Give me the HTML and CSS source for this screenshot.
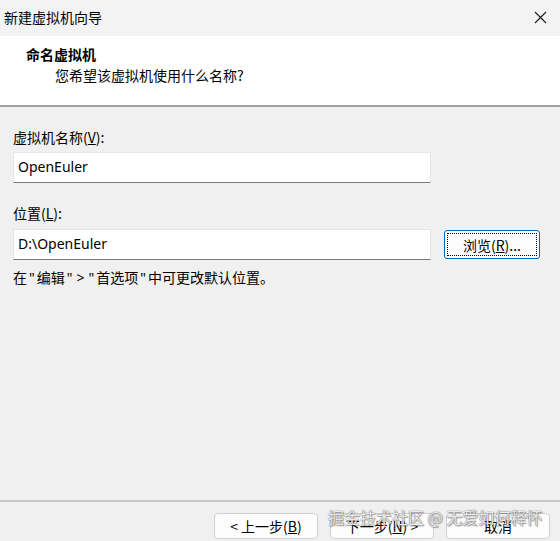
FILE: index.html
```html
<!DOCTYPE html>
<html lang="zh-CN">
<head>
<meta charset="utf-8">
<title>新建虚拟机向导</title>
<link rel="stylesheet" href="styles.css">
</head>
<body>
<div class="window">
  <div class="titlebar">
    <span class="title">新建虚拟机向导</span>
    <svg class="close" width="13" height="13" viewBox="0 0 13 13"><path d="M1 1 L12 12 M12 1 L1 12" stroke="#1a1a1a" stroke-width="1.1" fill="none"/></svg>
  </div>
  <div class="header">
    <div class="h-title">命名虚拟机</div>
    <div class="h-sub">您希望该虚拟机使用什么名称?</div>
  </div>
  <div class="content">
    <div class="label">虚拟机名称(<u>V</u>):</div>
    <div class="row">
      <div class="input">OpenEuler</div>
    </div>
    <div class="label label2">位置(<u>L</u>):</div>
    <div class="row">
      <div class="input">D:\OpenEuler</div>
      <div class="browse"><span class="focus">浏览(<u>R</u>)...</span></div>
    </div>
    <div class="hint">在<span class="q">"</span>编辑<span class="q">"</span><span class="q">&gt;</span><span class="q">"</span>首选项<span class="q">"</span>中可更改默认位置。</div>
  </div>
  <div class="footer">
    <div class="btn">&lt; 上一步(<u>B</u>)</div>
    <div class="btn">下一步(<u>N</u>) &gt;</div>
    <div class="btn">取消</div>
    <div class="watermark">掘金技术社区 @ 无爱如何释怀</div>
  </div>
</div>
</body>
</html>
```
FILE: styles.css
```css
html, body {
  margin: 0;
  padding: 0;
}
body {
  width: 560px;
  height: 541px;
  overflow: hidden;
  background: #f0f0f0;
  font-family: "Segoe UI", "Noto Sans", "Noto Sans CJK SC", sans-serif;
  font-size: 14px;
  color: #000;
}
.window {
  display: flex;
  flex-direction: column;
  height: 541px;
}
.titlebar {
  height: 36px;
  background: #f3f3f3;
  display: flex;
  align-items: center;
  justify-content: space-between;
  padding: 0 13px 2px 4px;
  box-sizing: border-box;
}
.title {
  font-family: "Noto Sans CJK SC", sans-serif;
  font-size: 14px;
}
.header {
  height: 71px;
  background: #fff;
  border-bottom: 2px solid #a0a0a0;
  box-sizing: border-box;
  padding: 8px 0 0 26px;
  font-family: "Noto Sans CJK SC", sans-serif;
}
.h-title {
  font-weight: bold;
  font-size: 14px;
  line-height: 20px;
}
.h-sub {
  margin-left: 29px;
  margin-top: 1px;
  line-height: 20px;
}
.content {
  padding: 20px 0 0 13px;
  font-family: "Noto Sans CJK SC", sans-serif;
}
.label {
  line-height: 20px;
  margin-bottom: 5px;
}
.label2 {
  margin-top: 20px;
  margin-bottom: 6px;
}
.row {
  display: flex;
  align-items: center;
  gap: 13px;
}
.input {
  width: 418px;
  height: 31px;
  box-sizing: border-box;
  background: #fff;
  border: 1px solid #e6e6e6;
  border-bottom: 1px solid #7a7a7a;
  padding: 0 0 2px 4px;
  display: flex;
  align-items: center;
  font-family: "Segoe UI", "Noto Sans", "Noto Sans CJK SC", sans-serif;
}
.browse {
  width: 96px;
  height: 29px;
  box-sizing: border-box;
  border: 1px solid #0067c0;
  border-radius: 3px;
  background: #fdfdfd;
  padding: 2px;
  display: flex;
}
.focus {
  flex: 1;
  border: 1px dotted #000;
  display: flex;
  align-items: center;
  justify-content: center;
  line-height: 18px;
}
.hint {
  margin-top: 7px;
  line-height: 20px;
}
.q {
  font-family: "Noto Sans", sans-serif;
  padding: 0 2px;
}
.footer {
  margin-top: auto;
  border-top: 2px solid #c8c8c8;
  height: 41px;
  box-sizing: border-box;
  display: flex;
  justify-content: flex-end;
  align-items: flex-start;
  gap: 12px;
  padding: 11px 10px 0 0;
  position: relative;
  font-family: "Noto Sans CJK SC", sans-serif;
}
.btn {
  width: 104px;
  height: 26px;
  box-sizing: border-box;
  background: #fdfdfd;
  border: 1px solid #d0d0d0;
  border-radius: 4px;
  display: flex;
  align-items: center;
  justify-content: center;
  line-height: 18px;
}
.watermark {
  position: absolute;
  left: 328px;
  top: 4px;
  font-size: 16px;
  line-height: 22px;
  color: rgba(255, 255, 255, 0.85);
  text-shadow: 0 0 1px #777, 0 0 1px #777, 1px 1px 1px rgba(0,0,0,0.35);
  white-space: nowrap;
}
```
